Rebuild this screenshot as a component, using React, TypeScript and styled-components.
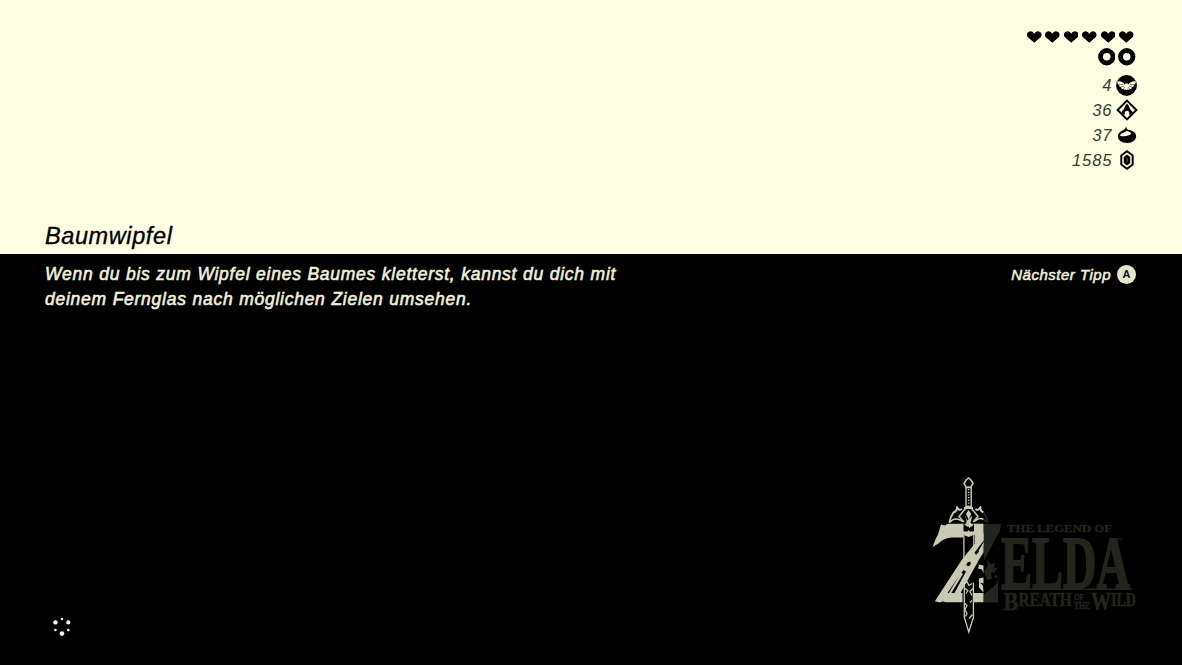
import React from "react";
import styled, { createGlobalStyle } from "styled-components";

const cream = "#ffffe4";
const ivory = "#f0f0d8";
const bone = "#c9c9b4";
const shade = "#24251d";

const GlobalStyle = createGlobalStyle`
  * { box-sizing: border-box; }
  html, body { margin: 0; background: #000; }
  body { font-family: "Liberation Sans", Arial, sans-serif; font-style: italic; }
  svg { display: block; }
`;

const Screen = styled.main`
  display: flex;
  flex-direction: column;
  width: 1182px;
  height: 665px;
  overflow: hidden;
  background: #000;
`;

const Upper = styled.header`
  display: flex;
  justify-content: space-between;
  height: 254px;
  padding: 30px 46px 0 45px;
  background: ${cream};
  color: #000;
`;

const Title = styled.h1`
  align-self: flex-end;
  margin: 0 0 3px;
  font-size: 23.5px;
  line-height: 30px;
  font-weight: 400;
  letter-spacing: 0.6px;
  -webkit-text-stroke: 0.35px currentColor;
`;

const Status = styled.section`
  display: flex;
  flex-direction: column;
  align-items: flex-end;
`;

const Hearts = styled.div`
  display: flex;
  gap: 3.9px;
  height: 13px;
  padding: 1px 2.5px 0 0;
`;

const Rings = styled.div`
  display: flex;
  gap: 3px;
  margin: 5px 0.5px 7px 0;
`;

const Counter = styled.div`
  display: flex;
  align-items: center;
  gap: 3px;
  height: 25px;
`;

const Amount = styled.span`
  font-size: 16.6px;
  line-height: 25px;
  letter-spacing: 0.9px;
  color: #3c3c34;
`;

const Lower = styled.section`
  display: flex;
  flex-direction: column;
  justify-content: space-between;
  flex: 1;
  padding: 7px 37px 29px 45px;
  color: ${ivory};
`;

const TipRow = styled.div`
  display: flex;
  justify-content: space-between;
  align-items: flex-start;
  padding-right: 9px;
`;

const Tip = styled.p`
  margin: 0;
  padding-top: 1px;
  font-size: 17.5px;
  line-height: 25px;
  letter-spacing: 0.74px;
  word-spacing: 0.2px;
  white-space: nowrap;
  -webkit-text-stroke: 0.6px currentColor;
`;

const NextTip = styled.div`
  display: flex;
  align-items: center;
  gap: 6px;
  height: 26px;
  font-size: 15px;
  letter-spacing: 0.5px;
  -webkit-text-stroke: 0.55px currentColor;
`;

const KeyCap = styled.span`
  width: 19px;
  height: 19px;
  border-radius: 50%;
  background: #e6e6d0;
  color: #111;
  font-size: 11px;
  line-height: 19px;
  letter-spacing: 0;
  font-style: normal;
  font-weight: 700;
  text-align: center;
  -webkit-text-stroke: 0;
`;

const BottomRow = styled.footer`
  display: flex;
  justify-content: space-between;
  align-items: flex-end;
`;

const Spinner = styled.svg`
  margin-left: 5px;
  margin-bottom: -1px;
`;

const Heart = () => (
  <svg width="14.5" height="12" viewBox="0 0 14 12" preserveAspectRatio="none">
    <path d="M7 11.8 L0.6 6 Q-0.6 4 0.5 1.8 Q1.6 .2 3.7 .3 Q5.9 .4 7 2.7 Q8.1 .4 10.3 .3 Q12.4 .2 13.5 1.8 Q14.6 4 13.4 6Z" />
  </svg>
);

const Ring = () => (
  <svg width="17.5" height="17.5" viewBox="0 0 17.5 17.5">
    <circle cx="8.75" cy="8.75" r="6.2" fill="none" stroke="#000" strokeWidth="4.9" />
  </svg>
);

const WingIcon = () => (
  <svg width="21" height="21" viewBox="0 0 21 21">
    <circle cx="10.5" cy="10.5" r="10.4" />
    <path fill={cream} d="M.9 6.5 Q4 6 6.3 7.2 Q8 8 8.6 9.8 L9.2 8.5 H11.8 L12.4 9.8 Q13 8 14.7 7.2 Q17 6 20.1 6.5 Q19.7 9 17.8 9.9 L18.2 10.5 Q17.4 12.2 15.8 12.3 L16 13 Q15 14.2 13.5 13.8 L13.3 14.7 Q12.4 15 11.8 14.2 L10.5 15.3 9.2 14.2 Q8.6 15 7.7 14.7 L7.5 13.8 Q6 14.2 5 13 L5.2 12.3 Q3.6 12.2 2.8 10.5 L3.2 9.9 Q1.3 9 .9 6.5Z" />
    <path fill="none" stroke="#000" strokeWidth=".5" d="M3 9.8 L7.2 9.4 M5 12.2 L8 11.1 M7.5 14 L9 12 M18 9.8 L13.8 9.4 M16 12.2 L13 11.1 M13.5 14 L12 12" />
  </svg>
);

const ShrineIcon = () => (
  <svg width="22" height="22" viewBox="0 0 22 22">
    <path fill="none" stroke="#000" strokeWidth="2" d="M11 1.6 L20.4 11 L11 20.4 L1.6 11Z" />
    <path d="M11 4.5 Q13.2 6.5 14 10 L16.7 13.3 L14 16 L13.2 15 V13 Q11 10.6 8.8 13 V15 L8 16 L5.3 13.3 L8 10 Q8.8 6.5 11 4.5Z" />
  </svg>
);

const SeedIcon = () => (
  <svg width="20" height="18" viewBox="0 0 20 18">
    <path d="M9.3 .4 Q9 3.4 12.6 4.1 Q18.9 5.5 19.2 10.3 Q18.6 16.9 10.3 17 Q1.4 16.7 .8 10.7 Q.9 6.7 5.1 4.8 Q8 3.4 9.3 .4Z" />
    <path fill={cream} d="M3 9.2 Q4.2 7 7 6.4 Q9 6 9.8 4.7 Q11 5.6 13 6.1 Q15 7.2 13.4 8.6 Q10.3 10.6 5 10.2 Q3 10.1 3 9.2Z" />
  </svg>
);

const RupeeIcon = () => (
  <svg width="14" height="20" viewBox="0 0 14 20">
    <path fill="none" stroke="#000" strokeWidth="2" d="M7 1.3 L12.7 5.5 V14.5 L7 18.7 L1.3 14.5 V5.5Z" />
    <path d="M7 4.6 L10.2 7 V13 L7 15.4 L3.8 13 V7Z" />
    <path fill={cream} d="M6.4 8 H7.6 V12 H6.4Z" opacity=".35" />
  </svg>
);

const IconSlot = styled.span`
  display: flex;
  justify-content: center;
  width: 22px;
  margin-right: -1.5px;
`;

const Logo = () => (
  <svg width="215" height="160" viewBox="930 475.5 215 160" fontFamily='"Liberation Serif", serif' fontStyle="normal" fontWeight="700">
    <g fill={shade}>
      <path d="M984 523.5 H1001 L1000 530 L984 560Z" />
      <path d="M984 594 Q991 588 995 585 L998 579 V602 H984Z" />
      <path d="M987 580 L984 571 L988 565 L987 559 L991 564 L995 562 L994 567 L998 568 L994 572 L991 572 L992 578Z" />
      <circle cx="996" cy="576" r="1.5" />
      <path d="M1002 588 H1132 V589.5 H1002Z" />
      <g stroke={shade} strokeWidth=".3">
        <text x="1007" y="531.3" fontSize="10.8" textLength="105" lengthAdjust="spacingAndGlyphs">THE LEGEND OF</text>
      </g>
      <g stroke={shade} strokeWidth="1.8">
        <text x="1001" y="587.7" fontSize="75" textLength="129" lengthAdjust="spacingAndGlyphs">ELDA</text>
      </g>
      <g stroke={shade} strokeWidth=".4">
        <text x="1003.5" y="609.5" fontSize="25" textLength="15" lengthAdjust="spacingAndGlyphs">B</text>
        <text x="1018.5" y="605" fontSize="18" textLength="53" lengthAdjust="spacingAndGlyphs">REATH</text>
        <text x="1091" y="609.5" fontSize="25" textLength="20" lengthAdjust="spacingAndGlyphs">W</text>
        <text x="1111" y="605" fontSize="18" textLength="25" lengthAdjust="spacingAndGlyphs">ILD</text>
        <text x="1074" y="599" fontSize="9" textLength="10" lengthAdjust="spacingAndGlyphs">OF</text>
        <text x="1074" y="608" fontSize="10" textLength="16" lengthAdjust="spacingAndGlyphs">THE</text>
      </g>
      <text x="1117" y="540" fontSize="3.5">TM</text>
    </g>

    <path fill={bone} d="M941 524 L945 525 L948 523.3 H983.5 V545 H975 V534.5 L962 537 H951 Q943 538 938.5 543 L932.5 546.5 Q936 537 938 534Z" />
    <path fill={bone} d="M945 592.5 H983.5 V601.7 H945 L943 600.7 L940 602 L934.8 600.7Z" />

    <path fill="#000" d="M963.4 534 H974.4 V544 L974 591 L973 618 L968.8 632 L964 618 L962.5 603 V585 L966 575 L963.4 550Z" />
    <path fill="#000" d="M963.5 523 L967 526 H972 L974 523 V531 H963.5Z" />
    <path fill="none" stroke={bone} strokeWidth="1.3" d="M963.9 532 V560 M964.3 582 V617 L968.8 631.5 L973.4 617 V582 M973.8 533 V554" />
    <path fill="none" stroke={bone} strokeWidth="1.3" strokeLinejoin="round" d="M964.3 583 L967 581 L969 585 L972 583 M965 588 L968 590 L966 593 M972 595 L970 591 L973 588 M965 603 L967 605 L965 609 L967 613 L965.5 616 M970 602 L972 600 M969 618 L972.5 614" />
    <path fill={bone} d="M963 531 L967 532 L968.5 529.5 L970.5 532 L974.2 531 L972.5 535 L968.6 536.5 L964.7 535Z" />

    <path fill={bone} d="M975 543 L983.5 532 V552 L979.7 558 L960 593.5 H945 L934.8 600.7 L962 559Z" />
    <path fill="#000" d="M963.5 569.5 L966 571 L954.5 592.5 H947.5 L956 580Z M976.2 550 L983.7 540 V541.8 L978 551Z" />
    <path fill={bone} d="M961 572 L963 573.5 L951 593 H948.6Z" />
    <path fill="#000" d="M966.3 563.5 Q968 560.5 970.5 561.3 Q971.5 564 968.8 565.8 Q966.4 566 966.3 563.5Z M974.5 552 L977.5 548.5 L979 551 L976 554.5Z" />
    <path fill={bone} d="M979 564 L983.5 565 V573 L982 569 L978 568Z M979 578 L983.5 577 V583 L980 582 L983 585 L983.5 592 L979 587Z" />

    <path fill="#000" stroke={bone} strokeWidth="1.6" d="M966.1 479.5 L968.5 477.5 L971 479.5 L973 483 L970.7 486.8 H966.2 L964.2 483Z" />
    <path fill="#000" stroke={bone} strokeWidth="1.4" d="M966 487 H971.2 V506 H966Z" />
    <path stroke={bone} strokeWidth="1.5" strokeDasharray="1.2 1.5" d="M968.6 488.5 V505" />
    <path fill="none" stroke={bone} strokeWidth="1.9" strokeLinejoin="round" d="M964 507.5 H973 M962 508.5 Q959 511 957 506.5 Q957 511 953.5 512 Q950 517 949.4 522 M975.5 508.5 Q978 511 980.5 506.5 Q980 511 983.5 512" />
    <path fill="none" stroke={bone} strokeWidth="1.5" strokeLinejoin="round" d="M949.5 522 Q954 516.5 960 519.5 L963.5 521 L959 516 Q963 511 965.5 508 M983.5 519 Q980 517 976.5 519.5 L973.5 521 L978 516 Q974 511 971.6 508" />
    <path fill="none" stroke={shade} strokeWidth="1.6" d="M983.5 512 Q987 517 987.8 522 M983.5 519 Q986 520 987.5 522" />
    <path fill={bone} d="M968.6 509.5 L971.3 513.5 L968.6 519 L966 513.5Z M965 515 L967.5 520 L969 518.5 L972.3 515 L970.5 522 L972 525 L969 528 L968.5 523 L965.5 525 L966.8 521Z" />
  </svg>
);

const counters = [
  { amount: "4", Icon: WingIcon },
  { amount: "36", Icon: ShrineIcon },
  { amount: "37", Icon: SeedIcon },
  { amount: "1585", Icon: RupeeIcon },
];

export default function App() {
  return (
    <Screen>
      <GlobalStyle />
      <Upper>
        <Title>Baumwipfel</Title>
        <Status>
          <Hearts>
            {Array.from({ length: 6 }, (_, i) => <Heart key={i} />)}
          </Hearts>
          <Rings>
            <Ring />
            <Ring />
          </Rings>
          {counters.map(({ amount, Icon }) => (
            <Counter key={amount}>
              <Amount>{amount}</Amount>
              <IconSlot><Icon /></IconSlot>
            </Counter>
          ))}
        </Status>
      </Upper>
      <Lower>
        <TipRow>
          <Tip>
            Wenn du bis zum Wipfel eines Baumes kletterst, kannst du dich mit<br />
            deinem Fernglas nach möglichen Zielen umsehen.
          </Tip>
          <NextTip>
            Nächster Tipp
            <KeyCap>A</KeyCap>
          </NextTip>
        </TipRow>
        <BottomRow>
          <Spinner width="24" height="24" viewBox="50 613 24 24" fill={cream}>
            <circle cx="62" cy="619" r="1.2" />
            <circle cx="55.4" cy="622.4" r="2.2" />
            <circle cx="68.3" cy="622.4" r="2.1" />
            <circle cx="55.4" cy="630" r="1.3" />
            <circle cx="68.3" cy="630" r="1.3" />
            <circle cx="62" cy="633.6" r="2.3" />
          </Spinner>
          <Logo />
        </BottomRow>
      </Lower>
    </Screen>
  );
}
